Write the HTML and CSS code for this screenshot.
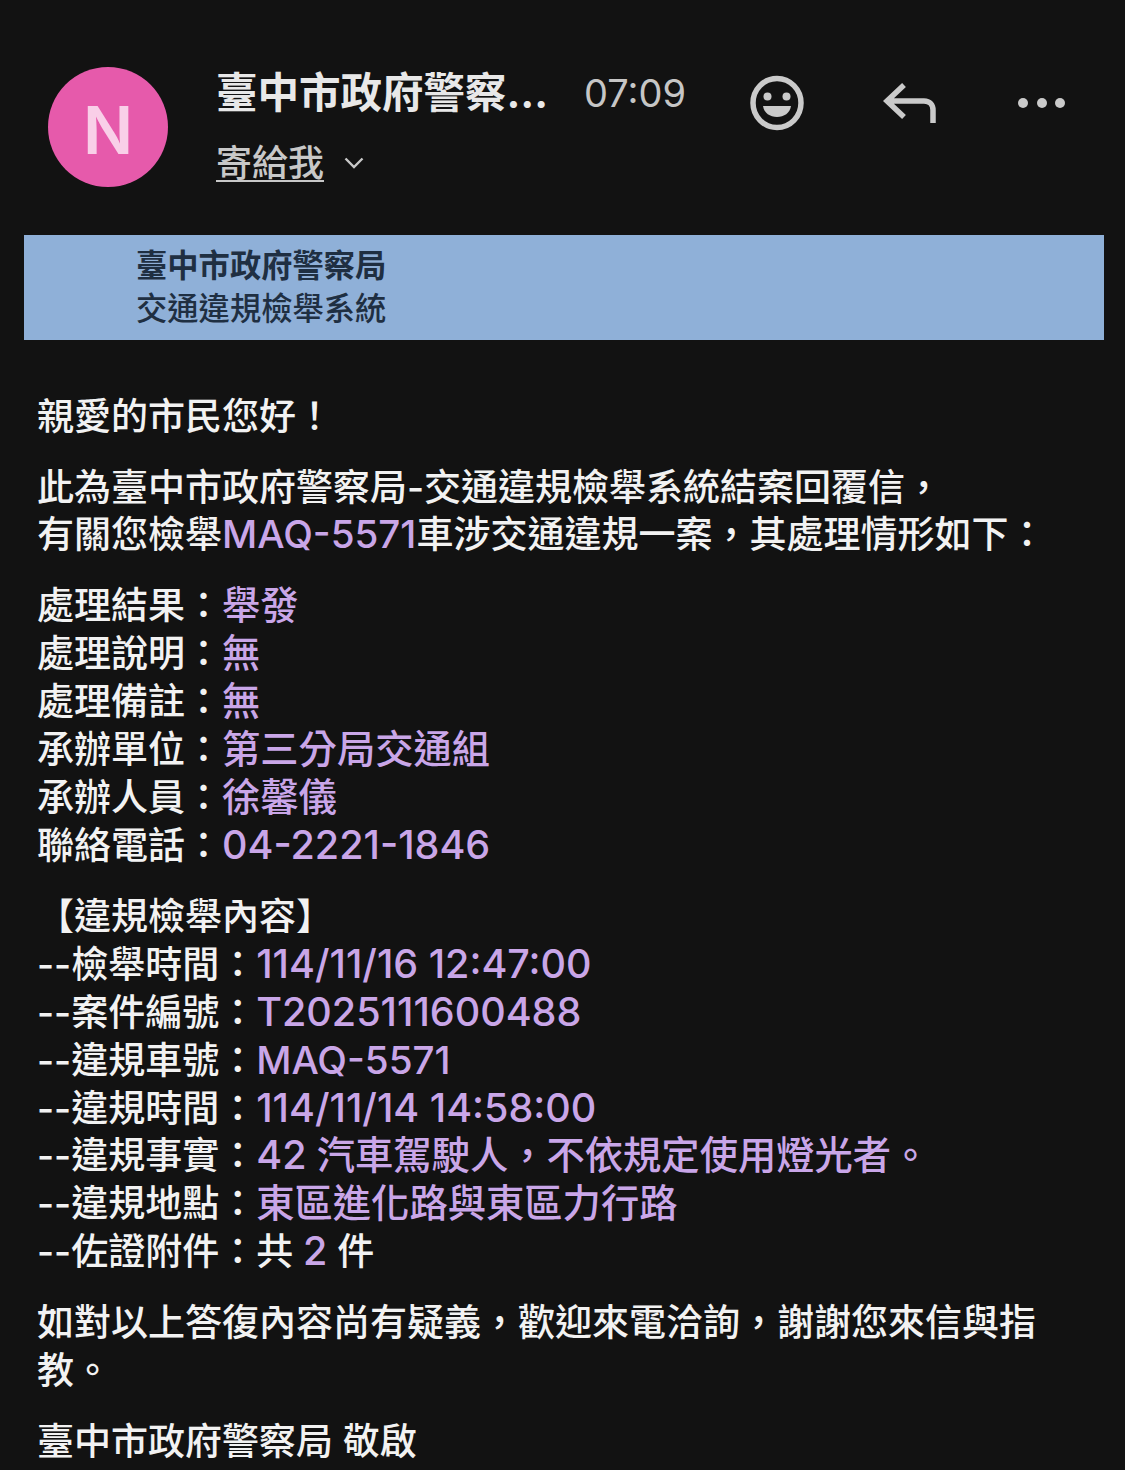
FILE: index.html
```html
<!DOCTYPE html>
<html lang="zh-Hant">

<head>
    <meta charset="UTF-8">
    <title>臺中市政府警察局</title>
    <link rel="stylesheet" href="styles.css">
</head>

<body>
    <div class="mail-header">
        <div class="avatar">N</div>
        <div class="sender">
            <div class="sender-top">
                <div class="sender-name">臺中市政府警察…</div>
                <div class="mail-time">07:09</div>
            </div>
            <div class="sender-to">
                <span class="to-me">寄給我</span>
                <svg class="to-arrow" width="20" height="12" viewBox="0 0 20 12">
                    <path d="M1.5 1.5 L10 10 L18.5 1.5" fill="none" stroke="#c8c8c8" stroke-width="2.4" />
                </svg>
            </div>
        </div>
        <div class="actions">
            <svg class="icon-smile" width="56" height="56" viewBox="0 0 56 56">
                <ellipse cx="28" cy="28" rx="24" ry="24.5" fill="none" stroke="#cacaca" stroke-width="5.5" />
                <circle cx="18.5" cy="21.5" r="4" fill="#cacaca" />
                <circle cx="37.5" cy="21.5" r="4" fill="#cacaca" />
                <path d="M14 31 H42 C41 38 35 42 28 42 C21 42 15 38 14 31 Z" fill="#cacaca" />
            </svg>
            <svg class="icon-reply" width="54" height="42" viewBox="0 0 54 42">
                <path d="M21 3 L4 19 L21 35 M4 19 H41 C47 19 50 23 50 28 V41" fill="none" stroke="#cacaca" stroke-width="5.5" />
            </svg>
            <svg class="icon-more" width="50" height="12" viewBox="0 0 50 12">
                <circle cx="6" cy="6" r="5" fill="#cacaca" />
                <circle cx="25" cy="6" r="5" fill="#cacaca" />
                <circle cx="43" cy="6" r="5" fill="#cacaca" />
            </svg>
        </div>
    </div>

    <div class="banner">
        <div class="banner-title">臺中市政府警察局</div>
        <div>交通違規檢舉系統</div>
    </div>

    <div class="mail-body">
        <p>親愛的市民您好！</p>
        <p>此為臺中市政府警察局-交通違規檢舉系統結案回覆信，<br>有關您檢舉<span class="hl plate">MAQ-5571</span>車涉交通違規一案，其處理情形如下：</p>
        <p>
            處理結果：<span class="hl">舉發</span><br>
            處理說明：<span class="hl">無</span><br>
            處理備註：<span class="hl">無</span><br>
            承辦單位：<span class="hl">第三分局交通組</span><br>
            承辦人員：<span class="hl">徐馨儀</span><br>
            聯絡電話：<span class="hl num">04-2221-1846</span>
        </p>
        <p>
            【違規檢舉內容】<br>
            --檢舉時間：<span class="hl num">114/11/16 12:47:00</span><br>
            --案件編號：<span class="hl num">T2025111600488</span><br>
            --違規車號：<span class="hl plate">MAQ-5571</span><br>
            --違規時間：<span class="hl num">114/11/14 14:58:00</span><br>
            --違規事實：<span class="hl"><span class="num">42</span> 汽車駕駛人，不依規定使用燈光者。</span><br>
            --違規地點：<span class="hl">東區進化路與東區力行路</span><br>
            --佐證附件：共 <span class="hl num">2</span> 件
        </p>
        <p>如對以上答復內容尚有疑義，歡迎來電洽詢，謝謝您來信與指教。</p>
        <p>臺中市政府警察局 敬啟</p>
    </div>
</body>

</html>
```

FILE: styles.css
```css
html,
body {
    margin: 0;
    padding: 0;
    height: 1470px;
    overflow: hidden;
    background: #121212;
}

body {
    color: #f2f2f2;
    font-family: Inter, "Noto Sans CJK TC", sans-serif;
}

.mail-header {
    display: flex;
    align-items: flex-start;
    height: 168px;
    padding: 67px 0 0 48px;
}

.avatar {
    width: 120px;
    height: 120px;
    border-radius: 50%;
    background: #e65aab;
    color: #f9cfe8;
    font-size: 66px;
    font-weight: 600;
    line-height: 126px;
    text-align: center;
    flex-shrink: 0;
}

.sender {
    margin-left: 48px;
    width: 469px;
    flex-shrink: 0;
}

.sender-top {
    display: flex;
    align-items: center;
    height: 52px;
}

.sender-name {
    width: 332px;
    font-size: 41.5px;
    font-weight: 700;
    line-height: 52px;
    color: #e8e8e8;
    white-space: nowrap;
}

.mail-time {
    margin-left: 36px;
    font-size: 38px;
    color: #c6c6c6;
}

.sender-to {
    display: flex;
    align-items: center;
    margin-top: 20px;
}

.to-me {
    font-size: 36px;
    font-weight: 500;
    line-height: 48px;
    color: #c8c8c8;
    text-decoration: underline;
    text-underline-offset: 4px;
    text-decoration-thickness: 2px;
}

.to-arrow {
    margin-left: 20px;
}

.actions {
    display: flex;
    align-items: center;
    margin-top: 8px;
    height: 56px;
}

.icon-smile {
    margin-left: 64px;
}

.icon-reply {
    margin-left: 78px;
}

.icon-more {
    margin-left: 80px;
}

.banner {
    margin: 0 21px 0 24px;
    height: 105px;
    padding: 10px 0 0 112px;
    box-sizing: border-box;
    background: #8fb0d8;
    color: #1f2f42;
    font-size: 31.3px;
    font-weight: 500;
    line-height: 43px;
}

.banner-title {
    font-weight: 700;
}

.mail-body {
    padding: 52.5px 60px 0 37px;
    font-size: 37px;
    font-weight: 500;
    line-height: 47.9px;
}

.mail-body p {
    margin: 0 0 23.1px 0;
}

.hl {
    color: #c9a6e8;
    font-size: 38.3px;
    line-height: 1;
}

.num {
    font-size: 39.5px;
}

.plate {
    font-size: 38.6px;
}
```
